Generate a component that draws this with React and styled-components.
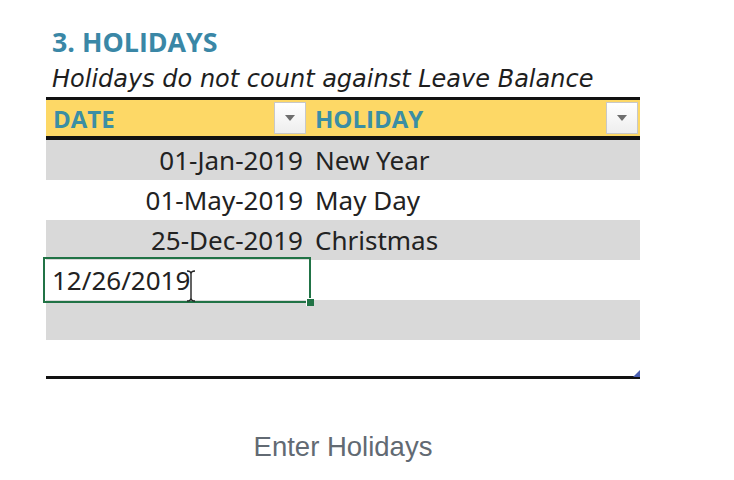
import React from 'react'
import styled, { createGlobalStyle } from 'styled-components'

const GlobalStyle = createGlobalStyle`
  html, body {
    margin: 0;
    padding: 0;
    background: #ffffff;
  }
`

const Page = styled.div`
  width: 734px;
  height: 480px;
  display: flex;
  flex-direction: column;
  padding: 26px 0 0 46px;
  box-sizing: border-box;
  position: relative;
`

const Title = styled.div`
  font-family: 'Open Sans', sans-serif;
  font-weight: 700;
  font-size: 26.8px;
  line-height: 32px;
  color: #3a87a6;
  padding-left: 6px;
`

const Subtitle = styled.div`
  font-family: 'DejaVu Sans', sans-serif;
  font-style: italic;
  font-size: 24px;
  line-height: 30px;
  color: #1e1e1e;
  padding-left: 6px;
  margin-top: 6px;
  white-space: nowrap;
`

const Table = styled.div`
  width: 594px;
  display: grid;
  grid-template-columns: 262px 1fr;
  border-top: 3px solid #111;
  border-bottom: 3px solid #111;
  margin-top: 3px;
  position: relative;
`

const HeadCell = styled.div`
  height: 36px;
  background: #fdd866;
  border-bottom: 4px solid #111;
  display: flex;
  align-items: center;
  justify-content: space-between;
  padding: 0 2px 0 7px;
  font-family: 'Open Sans', sans-serif;
  font-weight: 700;
  font-size: 24px;
  color: #3b8ea4;
`

const DropBtn = styled.div`
  width: 32px;
  height: 32px;
  box-sizing: border-box;
  border: 1px solid #c8c8c8;
  background: linear-gradient(#ffffff, #eeeeee);
  display: flex;
  align-items: center;
  justify-content: center;
`

const Cell = styled.div`
  height: ${p => (p.$last ? 36 : 40)}px;
  background: ${p => (p.$shade ? '#d9d9d9' : '#ffffff')};
  display: flex;
  align-items: center;
  justify-content: ${p => (p.$right ? 'flex-end' : 'flex-start')};
  padding: ${p => (p.$right ? '0 5px 0 0' : '0 0 0 7px')};
  font-family: 'Noto Sans', sans-serif;
  font-size: 26px;
  color: #222;
  position: relative;
`

const ActiveCell = styled(Cell)`
  outline: 2px solid #217346;
  outline-offset: 1px;
  justify-content: flex-start;
  padding: 0 0 0 6px;
  z-index: 1;
  &::after {
    content: '';
    position: absolute;
    right: -6px;
    bottom: -6px;
    width: 7px;
    height: 7px;
    background: #217346;
    border: 1px solid #fff;
    border-width: 1px 0 0 1px;
  }
`

const Cursor = styled.svg`
  position: absolute;
  left: 140px;
  top: 10px;
`

const ResizeMark = styled.div`
  position: absolute;
  right: 0;
  bottom: -1px;
  width: 0;
  height: 0;
  border-left: 7px solid transparent;
  border-bottom: 7px solid #4a5fb0;
`

const Caption = styled.div`
  width: 594px;
  text-align: center;
  margin-top: 52px;
  font-family: 'Liberation Sans', Arial, sans-serif;
  font-size: 27.5px;
  color: #626a73;
`

const Arrow = () => (
  <svg width='12' height='7' viewBox='0 0 12 7'>
    <path d='M1 0 L11 0 L6 6 Z' fill='#6e6e6e' />
  </svg>
)

const rows = [
  ['01-Jan-2019', 'New Year'],
  ['01-May-2019', 'May Day'],
  ['25-Dec-2019', 'Christmas'],
]

export default function App() {
  return (
    <Page>
      <GlobalStyle />
      <Title>3. HOLIDAYS</Title>
      <Subtitle>Holidays do not count against Leave Balance</Subtitle>
      <Table>
        <HeadCell>
          DATE
          <DropBtn>
            <Arrow />
          </DropBtn>
        </HeadCell>
        <HeadCell>
          HOLIDAY
          <DropBtn>
            <Arrow />
          </DropBtn>
        </HeadCell>
        {rows.map(([d, h], i) => (
          <React.Fragment key={d}>
            <Cell $right $shade={i % 2 === 0}>{d}</Cell>
            <Cell $shade={i % 2 === 0}>{h}</Cell>
          </React.Fragment>
        ))}
        <ActiveCell>
          12/26/2019
          <Cursor width='10' height='32' viewBox='0 0 10 32'>
            <path d='M1 1 Q5 1 5 4 L5 28 Q5 31 1 31 M9 1 Q5 1 5 4 M5 28 Q5 31 9 31' stroke='#222' strokeWidth='1.4' fill='none' />
          </Cursor>
        </ActiveCell>
        <Cell />
        <Cell $shade />
        <Cell $shade />
        <Cell $last />
        <Cell $last />
        <ResizeMark />
      </Table>
      <Caption>Enter Holidays</Caption>
    </Page>
  )
}
